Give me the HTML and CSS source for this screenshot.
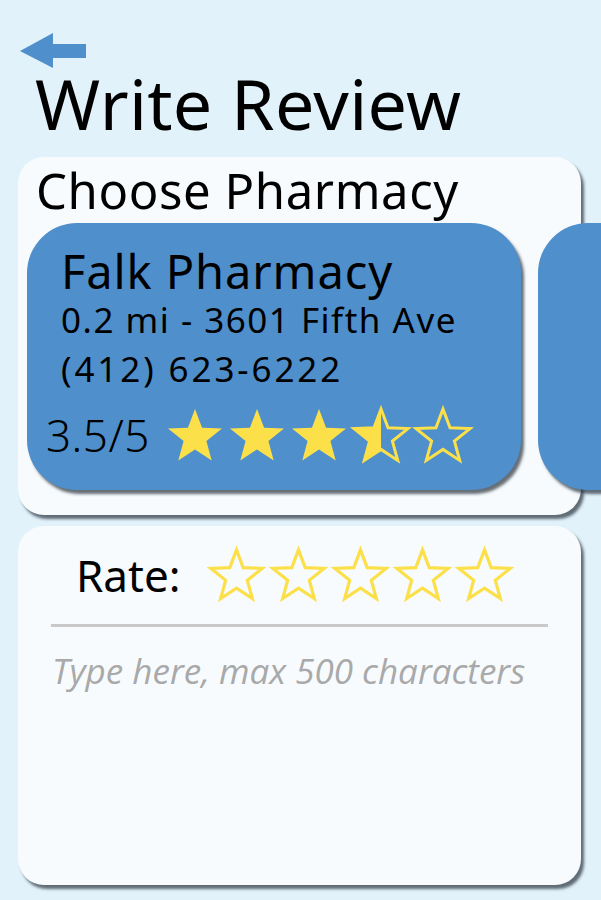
FILE: index.html
```html
<!DOCTYPE html>
<html lang="en">
<head>
<meta charset="utf-8">
<title>Write Review</title>
<link rel="stylesheet" href="styles.css">
</head>
<body>
<svg class="defs" width="0" height="0" aria-hidden="true">
  <defs>
    <polygon id="star-shape" points="27,0 34.05,18.69 54,19.62 38.41,32.11 43.69,51.38 27,40.4 10.31,51.38 15.59,32.11 0,19.62 19.95,18.69"/>
    <clipPath id="left-half"><rect x="-5" y="-5" width="32" height="62"/></clipPath>
  </defs>
</svg>
<div class="screen">
  <header class="top">
    <svg class="back" width="66" height="36" viewBox="0 0 66 36" aria-label="Back">
      <polygon points="0,18 33,0 33,35" fill="#4f8fcb"/>
      <rect x="32" y="11" width="34" height="14" fill="#4f8fcb"/>
    </svg>
    <h1 class="title">Write Review</h1>
  </header>

  <section class="card choose">
    <h2 class="choose-title">Choose Pharmacy</h2>
    <div class="pharmacy-row">
      <div class="pharmacy">
        <div class="ph-name">Falk Pharmacy</div>
        <div class="ph-line addr">0.2 mi - 3601 Fifth Ave</div>
        <div class="ph-line phone">(412) 623-6222</div>
        <div class="rating">
          <span class="score">3.5/5</span>
          <span class="stars">
            <svg class="star" viewBox="0 0 54 52"><use href="#star-shape" class="fill"/></svg>
            <svg class="star" viewBox="0 0 54 52"><use href="#star-shape" class="fill"/></svg>
            <svg class="star" viewBox="0 0 54 52"><use href="#star-shape" class="fill"/></svg>
            <svg class="star" viewBox="0 0 54 52"><use href="#star-shape" class="fill" clip-path="url(#left-half)"/><use href="#star-shape" class="outline"/></svg>
            <svg class="star" viewBox="0 0 54 52"><use href="#star-shape" class="outline"/></svg>
          </span>
        </div>
      </div>
      <div class="pharmacy next"></div>
    </div>
  </section>

  <section class="card review">
    <div class="rate-row">
      <span class="rate-label">Rate:</span>
      <span class="rate-stars">
        <svg class="rstar" viewBox="-3 -3 60 58"><use href="#star-shape" class="outline thick"/></svg>
        <svg class="rstar" viewBox="-3 -3 60 58"><use href="#star-shape" class="outline thick"/></svg>
        <svg class="rstar" viewBox="-3 -3 60 58"><use href="#star-shape" class="outline thick"/></svg>
        <svg class="rstar" viewBox="-3 -3 60 58"><use href="#star-shape" class="outline thick"/></svg>
        <svg class="rstar" viewBox="-3 -3 60 58"><use href="#star-shape" class="outline thick"/></svg>
      </span>
    </div>
    <div class="divider"></div>
    <div class="placeholder">Type here, max 500 characters</div>
  </section>
</div>
</body>
</html>
```
FILE: styles.css
```css
html, body {
  margin: 0;
  padding: 0;
}
body {
  background: #e1f2fb;
  width: 601px;
  height: 900px;
  overflow: hidden;
  font-family: "Noto Sans", "Open Sans", sans-serif;
  color: #000;
}
.defs {
  position: absolute;
  width: 0;
  height: 0;
}
.screen {
  display: flex;
  flex-direction: column;
}
.top {
  padding: 33px 0 0 20px;
  height: 124px;
  box-sizing: border-box;
}
.back {
  display: block;
}
.title {
  margin: -1px 0 0 15px;
  font-size: 70px;
  line-height: 70px;
  font-weight: 400;
  letter-spacing: 0.3px;
}
.card {
  background: #f7fbfe;
  border-radius: 26px;
  box-shadow: 3px 4px 3px rgba(40, 50, 60, 0.7);
  margin-left: 18px;
  width: 563px;
  box-sizing: border-box;
}
.choose {
  height: 358px;
  margin-top: 33px;
  padding-top: 5px;
}
.choose-title {
  margin: 0 0 0 18px;
  font-size: 49px;
  line-height: 56px;
  font-weight: 400;
  letter-spacing: 0.6px;
}
.pharmacy-row {
  display: flex;
  gap: 17px;
  margin: 5px 0 0 9px;
}
.pharmacy {
  flex: none;
  width: 494px;
  height: 267px;
  background: #4f8fcb;
  border-radius: 50px;
  box-shadow: 3px 4px 3px rgba(40, 50, 60, 0.7);
  box-sizing: border-box;
  padding: 24px 0 0 34px;
}
.pharmacy.next {
  width: 120px;
  padding: 0;
}
.ph-name {
  font-size: 47px;
  line-height: 48px;
  letter-spacing: 0.9px;
}
.ph-line {
  font-size: 35px;
  line-height: 49px;
}
.addr {
  letter-spacing: 1.5px;
}
.phone {
  letter-spacing: 2.9px;
}
.rating {
  display: flex;
  align-items: center;
  margin: 16px 0 0 -15px;
  height: 52px;
}
.score {
  font-size: 44px;
  line-height: 52px;
  font-weight: 300;
  letter-spacing: 0.5px;
  width: 122px;
}
.stars {
  display: flex;
  gap: 8px;
}
.star {
  width: 54px;
  height: 52px;
  overflow: visible;
}
.fill {
  fill: #fce04a;
}
.outline {
  fill: none;
  stroke: #fce04a;
  stroke-width: 3;
  stroke-linejoin: miter;
  stroke-miterlimit: 4;
}
.outline.thick {
  stroke-width: 3.4;
}
.review {
  height: 359px;
  margin-top: 11px;
  padding-top: 20px;
}
.rate-row {
  display: flex;
  align-items: center;
  height: 57px;
  padding-left: 58px;
}
.rate-label {
  width: 132px;
  font-size: 44px;
  line-height: 56px;
}
.rate-stars {
  display: flex;
  gap: 5px;
}
.rstar {
  width: 57px;
  height: 55px;
  overflow: visible;
}
.divider {
  height: 3px;
  background: #c9c9c9;
  margin: 21px 33px 0 33px;
}
.placeholder {
  margin: 24px 0 0 34px;
  font-family: "Open Sans", "Noto Sans", sans-serif;
  font-style: italic;
  font-size: 35px;
  line-height: 40px;
  color: #a9a9a9;
}
```
